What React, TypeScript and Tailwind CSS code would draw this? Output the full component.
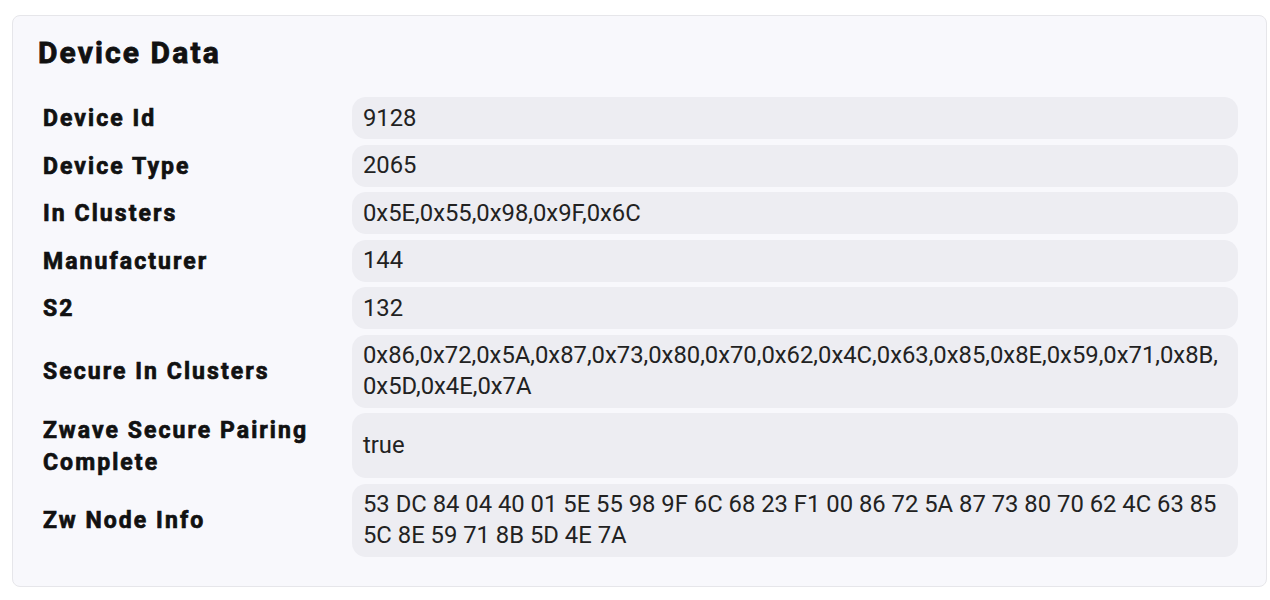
import React from "react";

const rows: [string, string][] = [
  ["Device Id", "9128"],
  ["Device Type", "2065"],
  ["In Clusters", "0x5E,0x55,0x98,0x9F,0x6C"],
  ["Manufacturer", "144"],
  ["S2", "132"],
  [
    "Secure In Clusters",
    "0x86,0x72,0x5A,0x87,0x73,0x80,0x70,0x62,0x4C,0x63,0x85,0x8E,0x59,0x71,0x8B,0x5D,0x4E,0x7A",
  ],
  ["Zwave Secure Pairing Complete", "true"],
  [
    "Zw Node Info",
    "53 DC 84 04 40 01 5E 55 98 9F 6C 68 23 F1 00 86 72 5A 87 73 80 70 62 4C 63 85 5C 8E 59 71 8B 5D 4E 7A",
  ],
];

export default function App() {
  return (
    <div className="w-[1270px] h-[600px] bg-white pt-[15px] pl-[12px]" style={{ fontFamily: "Roboto, 'Noto Sans', sans-serif" }}>
      <div className="w-[1255px] h-[572px] rounded-[8px] border border-[#e6e6ea] bg-[#f8f8fc] pl-[25px] pr-[28px] pt-[19px]">
        <h1 className="text-[30px] leading-[36px] font-bold tracking-[0.07em] text-[#111] [-webkit-text-stroke:0.8px_#111]">Device Data</h1>
        <div className="mt-[26px] grid grid-cols-[314px_1fr] gap-y-[5.5px]">
          {rows.map(([k, v]) => (
            <React.Fragment key={k}>
              <div className="flex items-center pl-[5px] pr-[2px] pt-[2px] text-[23px] leading-[31.5px] font-bold tracking-[0.09em] text-[#111] [-webkit-text-stroke:0.7px_#111]">
                {k}
              </div>
              <div className="flex items-center rounded-[14px] bg-[#ededf2] px-[11px] py-[5.5px] text-[23.8px] leading-[31px] text-[#222] [overflow-wrap:anywhere]">
                {v}
              </div>
            </React.Fragment>
          ))}
        </div>
      </div>
    </div>
  );
}
